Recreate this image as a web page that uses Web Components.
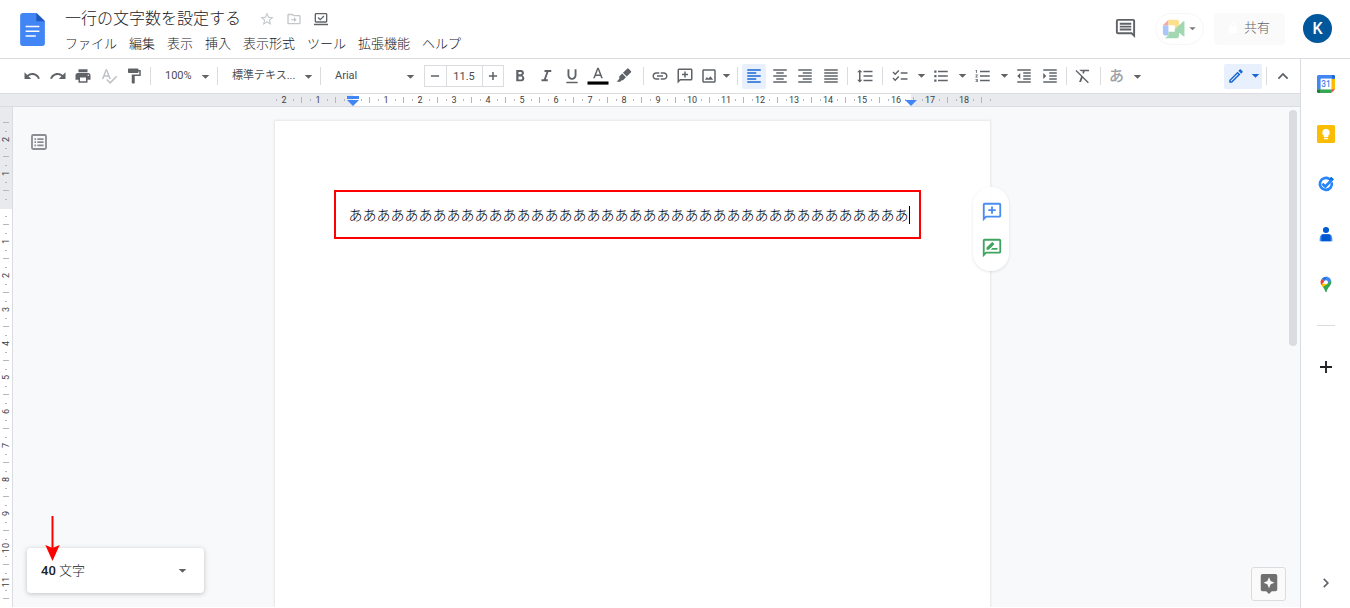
<!DOCTYPE html>
<html lang="ja">
<head>
<meta charset="utf-8">
<title>一行の文字数を設定する</title>
<style>
body { margin: 0; background: #fff; color: #202124; font-family: Roboto, "Noto Sans CJK JP", sans-serif; overflow: hidden; }
</style>
</head>
<body>
<docs-app></docs-app>
<script>
const define = (name, html, setup) => {
  const template = document.createElement('template');
  template.innerHTML = `<style>
    *, *::before { box-sizing: border-box; }
    :host { display: block; box-sizing: border-box; }
    button { border: 0; background: none; padding: 0; margin: 0; font: inherit; color: inherit; display: inline-flex; align-items: center; justify-content: center; cursor: pointer; }
    </style>` + html;
  customElements.define(name, class extends HTMLElement {
    constructor() {
      super();
      this.attachShadow({ mode: 'open' }).append(template.content.cloneNode(true));
    }
    connectedCallback() { if (setup) setup.call(this, this.shadowRoot); }
  });
};

const BUBBLE = 'M20 2H4c-1.1 0-2 .9-2 2v18l4-4h14c1.1 0 2-.9 2-2V4c0-1.1-.9-2-2-2zm0 14H5.17L4 17.17V4h16v12z';
const p = d => `<path d="${d}"/>`;
const ICONS = {
  undo: p('M12.5 8c-2.65 0-5.05.99-6.9 2.6L2 7v9h9l-3.62-3.62c1.39-1.16 3.16-1.88 5.12-1.88 3.54 0 6.55 2.31 7.6 5.5l2.37-.78C21.08 11.03 17.15 8 12.5 8z'),
  redo: p('M18.4 10.6C16.55 8.99 14.15 8 11.5 8c-4.65 0-8.58 3.03-9.96 7.22L3.9 16c1.05-3.19 4.05-5.5 7.6-5.5 1.95 0 3.73.72 5.12 1.88L13 16h9V7l-3.6 3.6z'),
  print: p('M19 8H5c-1.66 0-3 1.34-3 3v6h4v4h12v-4h4v-6c0-1.66-1.34-3-3-3zm-3 11H8v-5h8v5zm3-7c-.55 0-1-.45-1-1s.45-1 1-1 1 .45 1 1-.45 1-1 1zm-1-9H6v4h12V3z'),
  spell: p('M12.45 16h2.09L9.43 3H7.57L2.46 16h2.09l1.12-3h5.64l1.14 3zm-6.02-5L8.5 5.48 10.57 11H6.43zm15.16.59l-8.09 8.09L9.83 16l-1.41 1.41 5.09 5.09L23 13l-1.41-1.41z'),
  paint: p('M18 4V3c0-.55-.45-1-1-1H5c-.55 0-1 .45-1 1v4c0 .55.45 1 1 1h12c.55 0 1-.45 1-1V6h1v4H9v11c0 .55.45 1 1 1h2c.55 0 1-.45 1-1v-9h8V4h-3z'),
  caret: p('M5 9h14l-7 7z'),
  minus: p('M5 10.7h14v2.6H5z'),
  plusBold: p('M10.7 5h2.6v5.7H19v2.6h-5.7V19h-2.6v-5.7H5v-2.6h5.7z'),
  bold: p('M15.6 10.79c.97-.67 1.65-1.77 1.65-2.79 0-2.26-1.75-4-4-4H7v15h7.04c2.09 0 3.71-1.7 3.71-3.79 0-1.52-.86-2.82-2.15-3.42zM10 6.5h3c.83 0 1.5.67 1.5 1.5s-.67 1.5-1.5 1.5h-3v-3zm3.5 10H10v-4h3.5c.83 0 1.5.67 1.5 2s-.67 2-1.5 2z'),
  italic: p('M10 4v2.6h2.6l-3.4 9.8H6V19h8.4v-2.6h-2.6l3.4-9.8H19V4z'),
  underline: p('M12 17c3.31 0 6-2.69 6-6V3h-2.5v8c0 1.93-1.57 3.5-3.5 3.5S8.5 12.93 8.5 11V3H6v8c0 3.31 2.69 6 6 6zm-7.500 2.500v2h15v-2z'),
  color: p('M11 1L5.5 15h2.25l1.12-3h6.25l1.12 3h2.25L13 1h-2zm-1.38 9L12 3.67 14.38 10H9.620z') + '<path fill="#000" d="M-2 19.300h28v4.200h-28z"/>',
  marker: p('M16.200 2.200a1.500 1.500 0 0 1 2 0l3 3a1.500 1.500 0 0 1 0 2l-5.600 5.600-5-5zM9.600 8.800l5 5-4 4-1.500-.3L7 19.600H2.200l3.600-3.800-.2-3z'),
  link: p('M3.900 12c0-1.71 1.39-3.1 3.1-3.1h4V7H7c-2.76 0-5 2.24-5 5s2.24 5 5 5h4v-1.900H7c-1.710 0-3.100-1.390-3.100-3.100zM8 13h8v-2H8v2zm9-6h-4v1.900h4c1.710 0 3.100 1.390 3.100 3.100s-1.390 3.100-3.100 3.100h-4V17h4c2.760 0 5-2.240 5-5s-2.240-5-5-5z'),
  addComment: p(BUBBLE) + p('M11 14h2v-3h3V9h-3V6h-2v3H8v2h3z'),
  suggest: p(BUBBLE) + p('M10.500 14H18v-2h-5.500zm3.860-5.870c.2-.2.2-.51 0-.71l-1.770-1.770c-.2-.2-.51-.2-.71 0L6 11.530V14h2.470l5.890-5.870z'),
  image: p('M19 3H5c-1.100 0-2 .9-2 2v14c0 1.100.9 2 2 2h14c1.100 0 2-.9 2-2V5c0-1.100-.9-2-2-2zm0 16H5V5h14v14zM13.960 12.290l-2.750 3.040-1.960-1.860L6.500 17h11z'),
  left: p('M15 15H3v2h12v-2zm0-8H3v2h12V7zM3 13h18v-2H3v2zm0 8h18v-2H3v2zM3 3v2h18V3H3z'),
  center: p('M7 15v2h10v-2H7zm-4 6h18v-2H3v2zm0-8h18v-2H3v2zm4-6v2h10V7H7zM3 3v2h18V3H3z'),
  right: p('M3 21h18v-2H3v2zm6-4h12v-2H9v2zm-6-4h18v-2H3v2zm6-4h12V7H9v2zM3 3v2h18V3H3z'),
  justify: p('M3 21h18v-2H3v2zm0-4h18v-2H3v2zm0-4h18v-2H3v2zm0-4h18V7H3v2zm0-6v2h18V3H3z'),
  spacing: p('M6 7h2.500L5 3.500 1.500 7H4v10H1.500L5 20.500 8.500 17H6V7zm4-2v2h12V5H10zm0 14h12v-2H10v2zm0-6h12v-2H10v2z'),
  checklist: p('M22 7h-9v2h9V7zm0 8h-9v2h9v-2zM5.540 11L2 7.460l1.410-1.410 2.120 2.120 4.240-4.240 1.410 1.410L5.540 11zm0 8L2 15.460l1.410-1.410 2.120 2.120 4.240-4.240 1.410 1.410L5.540 19z'),
  bullets: p('M3 4.500h3v3H3zM3 10.500h3v3H3zM3 16.500h3v3H3zM8 19h13v-2H8v2zm0-6h13v-2H8v2zm0-8v2h13V5H8z'),
  numbers: p('M2 17h2v.5H3v1h1v.5H2v1h3v-4H2v1zm1-9h1V4H2v1h1v3zm-1 3h1.800L2 13.100v.9h3v-1H3.200L5 10.900V10H2v1zm6-6v2h13V5H8zm0 14h13v-2H8v2zm0-6h13v-2H8v2z'),
  outdent: p('M11 17h10v-2H11v2zm-8-5l4 4V8l-4 4zm0 9h18v-2H3v2zM3 3v2h18V3H3zm8 6h10V7H11v2zm0 4h10v-2H11v2z'),
  indent: p('M3 21h18v-2H3v2zM3 8v8l4-4-4-4zm8 9h10v-2H11v2zM3 3v2h18V3H3zm8 6h10V7H11v2zm0 4h10v-2H11v2z'),
  clear: p('M3.270 4L2 5.270l7.500 7.500L6.800 20h2.600l2-5.300L18.500 21.500l1.300-1.300zM7 3.500l2.300 2.300h2.600l-.7 1.900 1.700 1.700 1.400-3.600H20V3.500z'),
  edit: p('M14.060 9.020l.92.92L5.920 19H5v-.92l9.060-9.060M17.660 3c-.25 0-.51.1-.7.29l-1.830 1.830 3.750 3.750 1.830-1.830c.39-.39.39-1.020 0-1.410l-2.340-2.340c-.2-.2-.45-.29-.71-.29zm-3.600 3.190L3 17.250V21h3.750L17.810 9.940l-3.750-3.750z'),
  up: p('M12 7.500l-7 7L6.700 16.200 12 10.900l5.300 5.300L19 14.500z'),
  chevron: p('M9.500 5L7.800 6.700 13.100 12l-5.300 5.300L9.500 19l7-7z'),
  star: p('M22 9.240l-7.190-.62L12 2 9.190 8.630 2 9.240l5.460 4.730L5.820 21 12 17.270 18.180 21l-1.630-7.030L22 9.240zM12 15.400l-3.760 2.270 1-4.280-3.320-2.880 4.380-.38L12 6.100l1.710 4.040 4.380.38-3.320 2.880 1 4.280L12 15.400z'),
  move: p('M20 6h-8l-2-2H4c-1.100 0-2 .9-2 2v12c0 1.100.9 2 2 2h16c1.100 0 2-.9 2-2V8c0-1.100-.9-2-2-2zm0 12H4V6.500h5.200l2 1.500H20v10zm-8-1l4-4-4-4v3H8v2h4v3z'),
  saved: p('M4.500 3h15c1.100 0 2 .9 2 2v10.500c0 1.100-.9 2-2 2h-15c-1.100 0-2-.9-2-2V5c0-1.100.9-2 2-2zm0 2v10.500h15V5zM1.500 19.300h21v2h-21zM8.200 9.100l2.700 2.700 4.900-4.900 1.300 1.300-6.200 6.200-4-4z'),
  comment: p('M22 4c0-1.100-.9-2-2-2H4c-1.100 0-2 .9-2 2v12c0 1.100.9 2 2 2h14l4 4zM20 4v13.170L18.830 16H4V4h16zM6 12h12v2H6zm0-3h12v2H6zm0-3h12v2H6z'),
  outline: p('M19 2.500H5A2.500 2.500 0 0 0 2.500 5v14A2.500 2.500 0 0 0 5 21.500h14a2.500 2.500 0 0 0 2.500-2.500V5A2.500 2.500 0 0 0 19 2.500zM19.300 19.300H4.700V4.700h14.600zM6.500 7.500h2v2h-2zM10 7.500h7.500v2H10zM6.500 11.200h2v2h-2zM10 11.200h7.500v2H10zM6.500 15h2v2h-2zM10 15h7.500v2H10z'),
  plus: p('M10.600 3h2.800v7.600H21v2.800h-7.600V21h-2.800v-7.600H3v-2.800h7.600z'),
  explore: p('M19 1H5a2 2 0 0 0-2 2v15a2 2 0 0 0 2 2h4l3 3 3-3h4a2 2 0 0 0 2-2V3a2 2 0 0 0-2-2zm-5.200 11.300L12 16.500l-1.800-4.200L6 10.500l4.200-1.800L12 4.500l1.800 4.200 4.200 1.800z'),
  lock: p('M18 8h-1V6A5 5 0 0 0 7 6v2H6a2 2 0 0 0-2 2v10c0 1.100.9 2 2 2h12a2 2 0 0 0 2-2V10a2 2 0 0 0-2-2zM9 8V6a3 3 0 0 1 6 0v2z'),
  doc: '<path fill="#4285f4" d="M4.800 0h10.200l6 5.800V22a2 2 0 0 1-2 2H5a2 2 0 0 1-2-2V2a2 2 0 0 1 1.800-2z"/><path fill="#2058c0" d="M14.800 0L21 6h-6.200z"/><path fill="#fff" d="M7 9.300h10v1.100H7zM7 12.700h10v1.100H7zM7 16.100h7.400v1.100H7z"/>',
  meet: '<path fill="#4285f4" d="M1 8h6v11H3a2 2 0 0 1-2-2z"/><path fill="#ea4335" d="M1 8l6-6v6z"/><path fill="#fbbc04" d="M7 2h9.500a2 2 0 0 1 2 2v5l-4.500 3V8H7z"/><path fill="#34a853" d="M7 15h7v-3l9.500-8.500c.5-.4 1 0 1 .5v15.500c0 .5-.5.8-1 .4L18.500 16v4a2 2 0 0 1-2 2H3l4-3z"/>',
  calendar: '<path fill="#4285f4" d="M2 0h20a2 2 0 0 1 2 2v3H5v14H0V2a2 2 0 0 1 2-2z"/><path fill="#fbbc04" d="M19 5h5v14h-5z"/><path fill="#1967d2" d="M20 0h2a2 2 0 0 1 2 2v3h-4z"/><path fill="#34a853" d="M5 19h14v5H5z"/><path fill="#188038" d="M0 19h5v5H2a2 2 0 0 1-2-2z"/><path fill="#ea4335" d="M19 19h5l-5 5z"/><path fill="#fff" d="M5 5h14v14H5z"/><text x="12" y="16" text-anchor="middle" font-size="11" font-family="Roboto" font-weight="500" fill="#4285f4">31</text>',
  keep: '<rect width="24" height="24" rx="2" fill="#fbbc04"/><path fill="#fff" d="M12 5a5 5 0 0 0-3 9V16h6v-2a5 5 0 0 0-3-9zM9.300 17h5.400v2H9.300z"/>',
  tasks: '<path fill="none" stroke="#2684fc" stroke-width="4" d="M20.500 9.500A9 9 0 1 1 17 4.500"/><path fill="#0066da" d="M19.500 1L24 5l-4.500 4.500-3.500-4z"/><path fill="none" stroke="#2684fc" stroke-width="4" d="M6.500 11.500l4.500 4.300L21 5.500"/>',
  contacts: '<circle cx="12" cy="6" r="4.600" fill="#0059d1"/><path fill="#4c8df6" d="M8 12.500h8c3.500 0 5.500 3 5.500 7v3.500h-19v-3.500c0-4 2-7 5.500-7z"/><path fill="#0059d1" d="M8 12.500h8c2 0 3 1 3 4v6.500H5v-6.500c0-3 1-4 3-4z"/>',
  maps: '<path fill="#34a853" d="M20 9c0 6-6 8-7 14.500-.2.700-1.800.7-2 0C10.400 20 8.500 18 7 16L19.600 6z"/><path fill="#fbbc04" d="M8.500 11.500L14.500 12 7.200 16.400C5.800 14.600 5 13.300 4.500 12z"/><path fill="#ea4335" d="M5.700 4.200L10 7.800l-5.200 5.800C3 10 3.800 6.500 5.700 4.200z"/><path fill="#1a73e8" d="M5.700 4.200A8.200 8.200 0 0 1 14.300 1.300L10 7.800z"/><path fill="#4285f4" d="M14.300 1.300a8.200 8.200 0 0 1 5.300 5L14 11.500 9.800 7z"/><circle cx="12" cy="9.300" r="3" fill="#fff"/>'
};

define('docs-icon', `<style>
  :host { display: inline-block; width: 18px; height: 18px; flex: none; }
  svg { display: block; width: 100%; height: 100%; fill: currentColor; overflow: visible; }
</style><svg viewBox="0 0 24 24" aria-hidden="true"></svg>`, function (root) {
  root.querySelector('svg').innerHTML = ICONS[this.getAttribute('name')] || '';
});

define('docs-header', `<style>
  :host { display: flex; align-items: flex-start; height: 59px; border-bottom: 1px solid #dadce0; padding: 0 18px 0 16px; }
  .logo { display: block; width: 33px; height: 33px; margin: 13px 16px 0 0; }
  .logo docs-icon { width: 33px; height: 33px; }
  .text { flex: 1; padding-top: 7px; }
  .title { display: flex; align-items: center; height: 24px; }
  h1 { margin: 0 18px 0 0; font-size: 16px; line-height: 24px; font-weight: 300; }
  .title button { margin-right: 11px; color: #c4c7c9; }
  .title docs-icon { width: 16px; height: 16px; }
  .title button:last-child { color: #5f6368; }
  nav { display: flex; gap: 12px; margin-top: 3px; }
  nav button { font-size: 13px; line-height: 20px; font-weight: 300; white-space: nowrap; }
  .actions { display: flex; align-items: center; height: 57px; }
  .comments { margin-right: 18px; color: #5f6368; }
  .comments docs-icon { width: 23px; height: 23px; }
  .meet { width: 49px; height: 32px; border: 1px solid #f6f6f7; border-radius: 16px; margin-right: 10px; }
  .meet docs-icon { width: 22px; height: 22px; opacity: .45; }
  .meet docs-icon + docs-icon { width: 11px; height: 11px; margin-left: 3px; opacity: .6; }
  .share { width: 71px; height: 32px; background: #fafafa; border-radius: 4px; color: #5f6368; font-size: 13px; line-height: 20px; font-weight: 300; gap: 5px; padding: 0 2px 2px 0; margin-right: 18px; }
  .share docs-icon { width: 12px; height: 12px; color: #fff; }
  .avatar { width: 29px; height: 29px; border-radius: 50%; background: #01579b; color: #fff; font-size: 16px; font-weight: 500; }
</style>
<a class="logo" href="#" aria-label="ドキュメント ホーム"><docs-icon name="doc"></docs-icon></a>
<div class="text">
  <div class="title"><h1>一行の文字数を設定する</h1>
    <button aria-label="スター"><docs-icon name="star"></docs-icon></button>
    <button aria-label="移動"><docs-icon name="move"></docs-icon></button>
    <button aria-label="保存状況"><docs-icon name="saved"></docs-icon></button></div>
  <nav><button>ファイル</button><button>編集</button><button>表示</button><button>挿入</button><button>表示形式</button><button>ツール</button><button>拡張機能</button><button>ヘルプ</button></nav>
</div>
<div class="actions">
  <button class="comments" aria-label="コメント"><docs-icon name="comment"></docs-icon></button>
  <button class="meet" aria-label="通話"><docs-icon name="meet"></docs-icon><docs-icon name="caret"></docs-icon></button>
  <button class="share"><docs-icon name="lock"></docs-icon>共有</button>
  <button class="avatar">K</button>
</div>`);

define('tool-button', `<style>
  :host { flex: none; color: #5f6368; }
  :host([light]) { color: #bdc1c6; }
  :host([active]) { color: #1967d2; background: #e8f0fe; border-radius: 2px; }
  button { width: 24px; height: 24px; }
  :host([menu]) button { width: 39px; justify-content: flex-start; padding-left: 3px; }
  .caret { display: none; width: 13px; height: 13px; margin-left: 6px; color: #5f6368; }
  :host([menu]) .caret { display: block; }
  :host([tight]) button { width: 36px; }
  :host([tight]) .caret { margin-left: 2px; }
  :host([active]) .caret { color: inherit; margin-left: 4px; }
  :host([active][menu]) button { width: 38px; }
  #icon { width: 18px; height: 18px; }
  ::slotted(span) { width: 18px; font-size: 15px; line-height: 20px; font-weight: 500; color: #9aa0a6; }
</style><button><slot><docs-icon id="icon"></docs-icon></slot><docs-icon class="caret" name="caret"></docs-icon></button>`, function (root) {
  root.getElementById('icon').setAttribute('name', this.getAttribute('icon') || '');
  root.getElementById('icon').connectedCallback();
  root.querySelector('button').setAttribute('aria-label', this.getAttribute('label') || '');
});

define('tool-select', `<style>
  :host { display: flex; align-items: center; flex: none; height: 24px; padding: 0 1px 0 10px; color: #5f6368; }
  select { appearance: none; flex: 1; min-width: 0; border: 0; padding: 0; margin: 0; background: none; font-family: inherit; font-size: 11px; line-height: 16px; color: #4a4d51; }
  docs-icon { width: 13px; height: 13px; }
</style><select><option></option></select><docs-icon name="caret"></docs-icon>`, function (root) {
  root.querySelector('option').textContent = this.getAttribute('value');
  root.querySelector('select').setAttribute('aria-label', this.getAttribute('label'));
});

define('docs-toolbar', `<style>
  :host { display: flex; align-items: center; height: 35px; border-bottom: 1px solid #dadce0; padding: 0 5px 0 20px; background: #fff; }
  hr { width: 1px; height: 18px; border: 0; margin: 0 4px; background: #dadce0; flex: none; }
  .group { display: flex; justify-content: space-between; flex: none; }
  .history { width: 126px; } .zoom { width: 58px; } .style { width: 94px; } .font { width: 93px; }
  .size { display: flex; width: 80px; height: 22px; border: 1px solid #dadce0; margin: 0 4px 0 6px; flex: none; color: #5f6368; }
  .size button { flex: 1; }
  .size docs-icon { width: 14px; height: 14px; }
  .size input { width: 37px; border: solid #dadce0; border-width: 0 1px; padding: 0; margin: 0; text-align: center; font-family: inherit; font-size: 11px; color: #4a4d51; background: none; }
  .format { width: 131px; padding-right: 3px; } .insert { width: 85px; } .align { width: 101px; } .line { width: 26px; justify-content: center; }
  .lists { width: 175px; padding-left: 1px; } .clear { width: 25px; }
  .mode { margin-left: auto; }
</style>
<div class="group history">
  <tool-button icon="undo" label="元に戻す"></tool-button><tool-button icon="redo" label="やり直し"></tool-button><tool-button icon="print" label="印刷"></tool-button><tool-button light icon="spell" label="スペルチェック"></tool-button><tool-button icon="paint" label="書式を貼り付け"></tool-button>
</div><hr>
<tool-select class="zoom" value="100%" label="ズーム"></tool-select><hr>
<tool-select class="style" value="標準テキス..." label="スタイル"></tool-select><hr>
<tool-select class="font" value="Arial" label="フォント"></tool-select>
<div class="size"><button aria-label="縮小"><docs-icon name="minus"></docs-icon></button><input value="11.5" aria-label="フォントサイズ"><button aria-label="拡大"><docs-icon name="plusBold"></docs-icon></button></div>
<div class="group format">
  <tool-button icon="bold" label="太字"></tool-button><tool-button icon="italic" label="斜体"></tool-button><tool-button icon="underline" label="下線"></tool-button><tool-button icon="color" label="テキストの色"></tool-button><tool-button icon="marker" label="ハイライトの色"></tool-button>
</div><hr>
<div class="group insert">
  <tool-button icon="link" label="リンク"></tool-button><tool-button icon="addComment" label="コメントを追加"></tool-button><tool-button menu tight icon="image" label="画像"></tool-button>
</div><hr>
<div class="group align">
  <tool-button active icon="left" label="左揃え"></tool-button><tool-button icon="center" label="中央揃え"></tool-button><tool-button icon="right" label="右揃え"></tool-button><tool-button icon="justify" label="両端揃え"></tool-button>
</div><hr>
<div class="group line"><tool-button icon="spacing" label="行間隔"></tool-button></div><hr>
<div class="group lists">
  <tool-button menu icon="checklist" label="チェックリスト"></tool-button><tool-button menu icon="bullets" label="箇条書き"></tool-button><tool-button menu icon="numbers" label="番号付きリスト"></tool-button><tool-button icon="outdent" label="インデント減"></tool-button><tool-button icon="indent" label="インデント増"></tool-button>
</div><hr>
<div class="group clear"><tool-button icon="clear" label="書式をクリア"></tool-button></div><hr>
<tool-button menu label="入力ツール"><span>あ</span></tool-button>
<tool-button class="mode" active menu icon="edit" label="編集モード"></tool-button><hr>
<tool-button icon="up" label="メニューを非表示"></tool-button>`);

define('docs-ruler', `<style>
  :host { display: flex; justify-content: center; height: 13px; border-bottom: 1px solid #dadce0; padding: 0 48px 0 13px; background: #e8eaed; overflow: hidden; }
  .strip { position: relative; width: 715px; flex: none; background: linear-gradient(90deg, transparent 78px, #fff 78px 636px, transparent 636px); }
  .cells { display: flex; width: 725px; margin-left: -8px; }
  .cells span { flex: none; width: 34px; height: 12px; text-align: center; font-size: 9px; line-height: 12px; color: #3c4043;
    background: linear-gradient(#b4b7bb, #b4b7bb) 0 3px / 1px 6px no-repeat, linear-gradient(#b4b7bb, #b4b7bb) 9px 5px / 1px 2px no-repeat, linear-gradient(#b4b7bb, #b4b7bb) 26px 5px / 1px 2px no-repeat; }
  .cells span:first-child { background-position: -2px 3px, 9px 5px, 26px 5px; }
  .cells span:last-child { width: 11px; }
  .mark { position: absolute; top: 0; left: 72px; width: 12px; height: 12px; }
  .mark.end { left: 630px; }
</style>
<div class="strip"><div class="cells"></div>
<svg class="mark" viewBox="0 0 12 12" fill="#4285f4"><path d="M0 2h12v3H0zM0 6h12L6 12z"/></svg>
<svg class="mark end" viewBox="0 0 12 12" fill="#4285f4"><path d="M0 6h12L6 12z"/></svg></div>`, function (root) {
  root.querySelector('.cells').innerHTML = [2, 1, '', ...Array.from({ length: 18 }, (_, i) => i + 1), ''].map(n => `<span>${n}</span>`).join('');
});

define('docs-side-ruler', `<style>
  :host { width: 13px; border-right: 1px solid #dadce0; padding-top: 15px; background: linear-gradient(#e8eaed 102px, #fff 102px); overflow: hidden; }
  div { height: 34px; padding-top: 2px; display: flex; align-items: center; justify-content: center;
    background: linear-gradient(#b4b7bb, #b4b7bb) 3px 0 / 6px 1px no-repeat, linear-gradient(#b4b7bb, #b4b7bb) 5px 9px / 2px 1px no-repeat, linear-gradient(#b4b7bb, #b4b7bb) 5px 26px / 2px 1px no-repeat; }
  span { writing-mode: vertical-rl; transform: rotate(180deg); font-size: 9px; line-height: 12px; color: #3c4043; }
</style><slot></slot>`, function (root) {
  for (const n of [2, 1, '', ...Array.from({ length: 11 }, (_, i) => i + 1), '']) {
    const cell = document.createElement('div');
    cell.innerHTML = `<span>${n}</span>`;
    root.append(cell);
  }
});

define('docs-page', `<style>
  :host { width: 715px; flex: none; margin-top: 14px; padding: 69px 69px 0 59px; background: #fff; box-shadow: 0 0 2px 1px rgba(60, 64, 67, .1); }
</style><slot></slot>`);

define('docs-callout', `<style>
  :host { display: flex; align-items: center; justify-content: center; height: 49px; border: 2px solid #f00; padding-left: 3px; color: #000; }
  p { margin: 0; font-size: 14px; line-height: 18px; font-weight: 300; white-space: nowrap; border-right: 1px solid #000; }
</style><p><slot></slot></p>`);

define('docs-editor', `<style>
  :host { display: flex; min-height: 0; position: relative; background: #f8f9fa; overflow: hidden; }
  main { flex: 1; display: flex; justify-content: center; padding-right: 48px; position: relative; }
  .scroll { position: absolute; top: 3px; right: 3px; width: 8px; height: 236px; border-radius: 4px; background: #dadce0; }
  .outline { position: absolute; left: 16px; top: 25px; width: 20px; height: 20px; color: #8a8d91; }
  .outline docs-icon { width: 20px; height: 20px; }
  .bubble { position: absolute; left: calc(50% + 316px); top: 80px; width: 36px; height: 84px; border-radius: 18px; background: rgba(255, 255, 255, .92); box-shadow: 0 1px 3px rgba(60, 64, 67, .15); display: flex; flex-direction: column; align-items: center; justify-content: center; gap: 14px; padding: 1px 0 0 2px; }
  .bubble docs-icon { width: 22px; height: 22px; }
  .add { color: #4a8cf0; } .suggest { color: #3fa45f; }
  .count { position: absolute; left: 14px; bottom: 14px; width: 177px; height: 45px; border-radius: 4px; background: #fff; box-shadow: 0 1px 5px rgba(60, 64, 67, .3); justify-content: space-between; padding: 0 15px 0 14px; font-size: 13px; line-height: 20px; font-weight: 300; }
  .count b { font-weight: 500; }
  .count docs-icon { width: 13px; height: 13px; color: #5f6368; }
  .arrow { position: absolute; left: 32px; bottom: 46px; width: 16px; height: 46px; }
  .explore { position: absolute; right: 14px; bottom: 6px; width: 35px; height: 34px; border: 1px solid #dadce0; border-radius: 3px; background: #fafafa; color: #707070; }
  .explore docs-icon { width: 22px; height: 22px; }
</style>
<docs-side-ruler></docs-side-ruler>
<main>
  <docs-page><docs-callout>ああああああああああああああああああああああああああああああああああああああああ</docs-callout></docs-page>
  <button class="outline" aria-label="概要を表示"><docs-icon name="outline"></docs-icon></button>
  <div class="bubble"><button class="add" aria-label="コメントを追加"><docs-icon name="addComment"></docs-icon></button><button class="suggest" aria-label="編集を提案"><docs-icon name="suggest"></docs-icon></button></div>
  <button class="count"><span><b>40</b> 文字</span><docs-icon name="caret"></docs-icon></button>
  <svg class="arrow" viewBox="0 0 16 46" aria-hidden="true"><path d="M7.500 1v32" stroke="#f00" stroke-width="2"/><path d="M7.500 46L.3 30l7.200 3 7.200-3z" fill="#f00"/></svg>
  <button class="explore" aria-label="データ探索"><docs-icon name="explore"></docs-icon></button>
  <div class="scroll"></div>
</main>`);

define('docs-side-panel', `<style>
  :host { display: flex; flex-direction: column; align-items: center; border-left: 1px solid #dadce0; padding: 16px 0; background: #fff; }
  button { width: 20px; height: 18px; margin-bottom: 32px; }
  hr { width: 18px; height: 1px; border: 0; margin: 0 0 32px; background: #dadce0; }
  .last { margin: auto 0 0; color: #5f6368; }
  .small { width: 16px; height: 16px; }
</style>
<button aria-label="カレンダー"><docs-icon name="calendar"></docs-icon></button>
<button aria-label="Keep"><docs-icon name="keep"></docs-icon></button>
<button aria-label="ToDo リスト"><docs-icon class="small" name="tasks"></docs-icon></button>
<button aria-label="連絡先"><docs-icon class="small" name="contacts"></docs-icon></button>
<button aria-label="マップ"><docs-icon class="small" name="maps"></docs-icon></button>
<hr>
<button aria-label="アドオンを取得"><docs-icon class="small" name="plus"></docs-icon></button>
<button class="last" aria-label="サイドパネルを非表示"><docs-icon class="small" name="chevron"></docs-icon></button>`);

define('docs-app', `<style>
  :host { display: grid; grid-template-rows: auto minmax(0, 1fr); height: 100vh; }
  .body { display: grid; grid-template-columns: minmax(0, 1fr) 50px; min-height: 0; }
  .work { display: grid; grid-template-rows: auto auto minmax(0, 1fr); min-height: 0; padding-bottom: 1px; }
</style>
<docs-header></docs-header>
<div class="body">
  <div class="work"><docs-toolbar></docs-toolbar><docs-ruler></docs-ruler><docs-editor></docs-editor></div>
  <docs-side-panel></docs-side-panel>
</div>`);
</script>
</body>
</html>
